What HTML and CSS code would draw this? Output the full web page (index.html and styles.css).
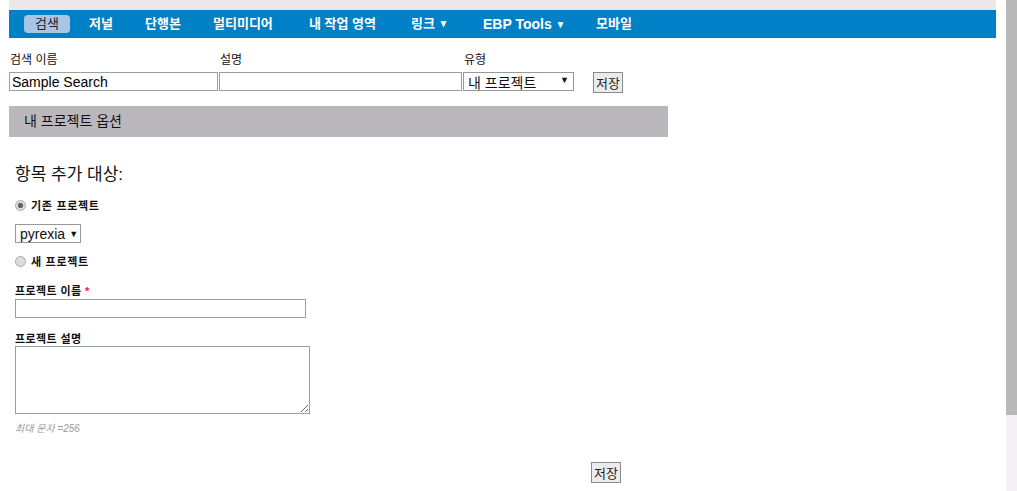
FILE: index.html
```html
<!DOCTYPE html>
<html lang="ko">

<head>
  <meta charset="UTF-8">
  <title>내 프로젝트 옵션</title>
  <link rel="stylesheet" href="styles.css">
</head>

<body>
  <div class="page">
    <div class="main">
      <div class="top-strip"></div>

      <!-- Navigation -->
      <ul class="nav">
        <li class="active">검색</li>
        <li>저널</li>
        <li>단행본</li>
        <li>멀티미디어</li>
        <li>내 작업 영역</li>
        <li>링크 <span class="caret">&#9660;</span></li>
        <li class="latin">EBP Tools <span class="caret">&#9660;</span></li>
        <li>모바일</li>
      </ul>

      <!-- Search save row -->
      <div class="save-row">
        <div class="field f-name">
          <label>검색 이름</label>
          <input type="text" class="txt" value="Sample Search">
        </div>
        <div class="field f-desc">
          <label>설명</label>
          <input type="text" class="txt">
        </div>
        <div class="field f-type">
          <label>유형</label>
          <div class="fake-select wide"><span>내 프로젝트</span><span class="arrow">&#9660;</span></div>
        </div>
        <button class="btn top-btn">저장</button>
      </div>

      <div class="section-head">내 프로젝트 옵션</div>

      <div class="options">
        <h3>항목 추가 대상:</h3>

        <div class="radio-row first">
          <span class="radio checked"></span>
          <b>기존 프로젝트</b>
        </div>

        <div class="fake-select small"><span>pyrexia</span><span class="arrow">&#9660;</span></div>

        <div class="radio-row second">
          <span class="radio"></span>
          <b>새 프로젝트</b>
        </div>

        <label class="sub-label">프로젝트 이름 <span class="req">*</span></label>
        <input type="text" class="txt proj-name">

        <label class="sub-label">프로젝트 설명</label>
        <textarea class="proj-desc"></textarea>

        <p class="hint">최대 문자 =256</p>

        <div class="bottom">
          <button class="btn">저장</button>
        </div>
      </div>
    </div>

    <div class="scrollbar"><div class="thumb"></div></div>
  </div>
</body>

</html>
```

FILE: styles.css
```css
/* Global */
* {
  margin: 0;
  padding: 0;
  box-sizing: border-box;
}

body {
  font-family: "Liberation Sans", "Noto Sans CJK KR", sans-serif;
  font-size: 13px;
  color: #111;
  background: #fff;
}

.page {
  display: flex;
  height: 491px;
  overflow: hidden;
}

.main {
  width: 996px;
  padding-left: 9px;
}

.top-strip {
  height: 10px;
  background: #ebe7ea;
}

/* Navigation */
.nav {
  list-style: none;
  display: flex;
  align-items: center;
  height: 28px;
  background: #0080c6;
  padding-left: 15px;
}

.nav li {
  color: #fff;
  font-weight: bold;
  font-size: 13px;
  line-height: 18px;
  white-space: nowrap;
}

.nav li.active {
  background: #aac4e6;
  color: #222;
  border-radius: 4px;
  font-weight: normal;
  width: 46px;
  text-align: center;
  margin-right: 19px;
}

.nav li:nth-child(2) { width: 56px; }
.nav li:nth-child(3) { width: 68px; }
.nav li:nth-child(4) { width: 96px; }
.nav li:nth-child(5) { width: 102px; }
.nav li:nth-child(6) { width: 72px; }
.nav li:nth-child(7) { width: 113px; }

.nav li.latin {
  font-size: 14px;
}

.caret {
  font-size: 10px;
  vertical-align: 1px;
}

/* Save row */
.save-row {
  display: flex;
  align-items: flex-end;
  margin-top: 14px;
}

.field label {
  display: block;
  padding-left: 1px;
  line-height: 17px;
  margin-bottom: 3px;
  font-size: 12px;
}

.txt {
  display: block;
  height: 19px;
  border: 1px solid #99a399;
  font-family: "Liberation Sans", "Noto Sans CJK KR", sans-serif;
  font-size: 14px;
  padding: 0 2px;
  outline: none;
}

.f-name .txt {
  width: 209px;
}

.f-desc {
  margin-left: 1px;
}

.f-desc .txt {
  width: 243px;
}

.f-type {
  margin-left: 1px;
}

.fake-select {
  display: flex;
  justify-content: space-between;
  align-items: center;
  border: 1px solid #999;
  background: #fff;
  font-size: 14px;
  padding: 0 4px;
}

.fake-select.wide {
  width: 111px;
  height: 19px;
}

.fake-select .arrow {
  font-size: 9px;
  margin-left: 4px;
}

.fake-select.wide .arrow {
  align-self: flex-start;
  margin-top: 2px;
}

.btn {
  font-family: "Liberation Sans", "Noto Sans CJK KR", sans-serif;
  font-size: 13px;
  background: #ececec;
  border: 1px solid #8a8a8a;
  width: 30px;
  height: 21px;
  padding: 0;
  color: #222;
}

.top-btn {
  margin-left: 19px;
  margin-bottom: -2px;
}

/* Project options */
.section-head {
  width: 659px;
  height: 31px;
  margin-top: 15px;
  background: #bab8bc;
  padding-left: 15px;
  line-height: 31px;
  font-size: 14px;
}

.options {
  padding-left: 6px;
}

.options h3 {
  font-size: 17px;
  font-weight: normal;
  margin-top: 26px;
  line-height: 24px;
}

.radio-row {
  display: flex;
  align-items: center;
  height: 16px;
  font-size: 11px;
  letter-spacing: 0.7px;
}

.radio-row.first {
  margin-top: 10px;
}

.radio-row.second {
  margin-top: 10px;
}

.radio {
  width: 11px;
  height: 11px;
  border-radius: 50%;
  border: 1px solid #aaa;
  background: #ddd;
  margin-right: 5px;
}

.radio.checked {
  background: radial-gradient(circle, #666 0 2.5px, #ddd 3px);
}

.fake-select.small {
  width: 66px;
  height: 19px;
  margin-top: 11px;
  padding: 0 3px 0 4px;
}

.sub-label {
  display: block;
  font-size: 11px;
  font-weight: bold;
  margin-top: 15px;
  line-height: 14px;
  letter-spacing: 0.4px;
}

.req {
  color: #e23;
}

.proj-name {
  width: 291px;
  margin-top: 1px;
}

.proj-name + .sub-label {
  margin-top: 14px;
}

.proj-desc {
  display: block;
  width: 295px;
  height: 68px;
  margin-top: 0;
  border: 1px solid #99a399;
  resize: both;
}

.hint {
  font-size: 10px;
  font-style: italic;
  color: #999;
  margin-top: 6px;
}

.bottom {
  width: 606px;
  display: flex;
  justify-content: flex-end;
  margin-top: 27px;
}

/* Fake scrollbar */
.scrollbar {
  width: 11px;
  margin-left: 10px;
  background: #f4f2f6;
}

.thumb {
  height: 415px;
  background: #b8b8b8;
}
```
